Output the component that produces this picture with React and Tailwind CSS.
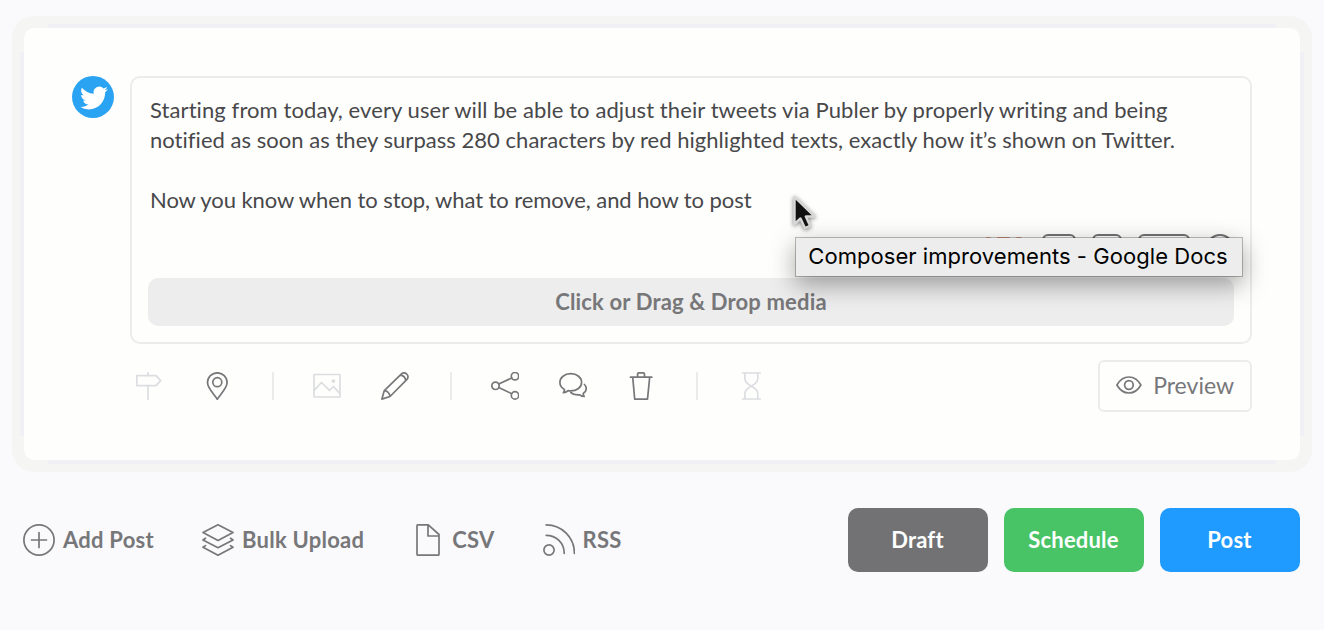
import React from "react";

const iconProps = {
  fill: "none",
  stroke: "currentColor",
  strokeWidth: 1.7,
  strokeLinecap: "round",
  strokeLinejoin: "round",
};

const ToolIcon = ({ children, muted }) => (
  <svg
    viewBox="0 0 28 28"
    className={`size-7 ${muted ? "text-[#dcdde0]" : "text-[#77777a]"}`}
    {...iconProps}
  >
    {children}
  </svg>
);

const ActionIcon = ({ children }) => (
  <svg viewBox="0 0 32 32" className="size-8 shrink-0" {...iconProps}>
    {children}
  </svg>
);

const Divider = () => <div className="ml-px -mr-px h-7 w-0.5 bg-[#ebebec]" />;

const TwitterAvatar = () => (
  <div className="flex size-[42px] shrink-0 items-center justify-center rounded-full bg-[#2aa3f3] pt-px pl-0.5">
    <svg viewBox="0 0 24 24" className="size-7" fill="#fff">
      <path d="M23.95 4.57a10 10 0 0 1-2.82.77 4.96 4.96 0 0 0 2.16-2.72c-.95.55-2 .95-3.13 1.18a4.92 4.92 0 0 0-8.38 4.48C7.69 8.1 4.07 6.13 1.64 3.16a4.92 4.92 0 0 0 1.52 6.57 4.9 4.9 0 0 1-2.23-.61v.06c0 2.38 1.7 4.37 3.95 4.82a5 5 0 0 1-2.21.09 4.94 4.94 0 0 0 4.6 3.42A9.87 9.87 0 0 1 0 19.54a13.99 13.99 0 0 0 7.55 2.21c9.05 0 14-7.5 14-13.98 0-.21 0-.42-.02-.63a9.94 9.94 0 0 0 2.46-2.55z" />
    </svg>
  </div>
);

const Cursor = () => (
  <svg
    viewBox="0 0 24 36"
    className="absolute top-[117px] left-[660px] h-9 w-6 drop-shadow-[0_1px_2px_rgba(0,0,0,0.5)]"
  >
    <path
      d="M2.5 2v27l6-5.5 4.4 9.5 5.2-2.2-4.3-9.300h8.700z"
      fill="#111"
      stroke="#d8d8d8"
      strokeWidth="2.4"
      strokeLinejoin="round"
    />
  </svg>
);

const Toolbar = () => (
  <div className="flex items-center gap-10">
    <ToolIcon muted>
      <path d="M1.8 3.7h19.2l4.7 5-4.7 4.9H1.8zM13 .8v2.9M13 13.6v13.6" />
    </ToolIcon>
    <ToolIcon>
      <path d="M14.3 27.2C11.5 22.5 4.5 16.5 4.5 10.6a9.8 9.8 0 0 1 19.6 0c0 5.9-7 11.9-9.8 16.6z" />
      <circle cx="14.3" cy="10.2" r="4.5" />
    </ToolIcon>
    <Divider />
    <ToolIcon muted>
      <rect x="1" y="2.5" width="26" height="22.5" rx="0.6" />
      <path d="M1.2 18.3 8.5 10.5l8 7.8 4-3.8 6.3 6.8" />
      <circle cx="20.4" cy="9" r="1" fill="currentColor" />
    </ToolIcon>
    <ToolIcon>
      <path d="m.9 27.1 2.4-8.5L20.5 1.8a3.5 3.5 0 0 1 5.2.3 3.5 3.5 0 0 1 .3 5.2L9 24.5zM3.3 18.6c2.9.2 5.3 2.700 5.700 5.900M19.200 3.200c3 .3 5.200 2.500 5.500 5.400" />
    </ToolIcon>
    <Divider />
    <ToolIcon>
      <circle cx="4.5" cy="13.8" r="3.7" />
      <circle cx="24" cy="4.2" r="3.7" />
      <circle cx="24" cy="23.4" r="3.7" />
      <path d="M7.8 12.1 20.7 5.9M7.8 15.5l12.9 6.2" />
    </ToolIcon>
    <ToolIcon>
      <path d="M4.4 20.7c.9-.9 1.3-2 1-3.3C2.6 15.8.9 13.3.9 10.5c0-5 4.7-8.8 10.9-8.8s10.800 3.900 10.800 8.800-4.700 8.400-10.900 8.400c-.9 0-1.800-.1-2.600-.2-1.300 1.200-3 2-4.700 2z" />
      <path d="M25.400 12.500c1.300 1.200 2 2.600 1.800 4.300-.1 2-1.200 3.700-3 4.800 0 1.200.3 2.100 1 2.900-1.700 0-3.200-.6-4.400-1.700-3.500.5-6.800-.3-9-2.300" />
    </ToolIcon>
    <ToolIcon>
      <path d="M3.5 5.2h21.3M5.7 5.2l2 21.9h12.8l2.2-21.9M10.6 5V2.2q0-1.3 1.3-1.3h4.3q1.3 0 1.3 1.3V5" />
    </ToolIcon>
    <Divider />
    <ToolIcon muted>
      <path d="M5.5 1h17.7M5.5 27h17.7M7.9 1.2v5.5c0 4 2.9 5 6.4 7.4 3.5-2.4 6.5-3.4 6.5-7.4V1.2M7.9 26.8v-5.3c0-4 2.9-5 6.4-7.4 3.5 2.4 6.5 3.4 6.5 7.4v5.3" />
    </ToolIcon>
  </div>
);

const links = [
  {
    label: "Add Post",
    icon: (
      <>
        <circle cx="16" cy="16" r="15.1" />
        <path d="M16 8.5v15M8.5 16h15" />
      </>
    ),
  },
  {
    label: "Bulk Upload",
    icon: (
      <path d="M16 .8 31 8.5 16 16.5 1 8.5zM3.5 14.3 1 16l15 7.7L31 16l-2.5-1.7M3.5 21.6 1 23.3l15 7.9 15-7.9-2.5-1.7" />
    ),
  },
  {
    label: "CSV",
    icon: (
      <path d="M6 .8h10.3L27 10.5v19.7a1 1 0 0 1-1 1H6a1 1 0 0 1-1-1V1.8a1 1 0 0 1 1-1zM16 1v11h11" />
    ),
  },
  {
    label: "RSS",
    icon: (
      <>
        <circle cx="6" cy="26" r="5.1" />
        <path d="M3.2 11.3c10 0 18 7.7 18 18M3.2.9c15.7 0 28.2 12.6 28.2 28.4" />
      </>
    ),
  },
];

const buttons = [
  { label: "Draft", color: "bg-[#727274]" },
  { label: "Schedule", color: "bg-[#48c366]" },
  { label: "Post", color: "bg-[#1f9aff]" },
];

export default function App() {
  return (
    <div className="h-[630px] w-[1324px] overflow-hidden bg-[#fafafd] px-6 pt-7 font-['Lato',sans-serif] text-[22px] [font-variant-ligatures:none]">
      <section className="flex h-[432px] items-start gap-4 rounded-[10px] bg-[#fefefd] px-12 pt-12 shadow-[0_-28px_0_-24px_#f1f1f5,0_28px_0_-24px_#f1f1f5,-28px_0_0_-24px_#f1f1f5,28px_0_0_-24px_#f1f1f5,0_0_0_12px_#f5f5f4]">
        <TwitterAvatar />
        <div className="w-[1122px]">
          <div className="relative flex h-[268px] flex-col rounded-[10px] border-2 border-[#ececed] px-4 pt-[17px] pb-4">
            <div className="pl-0.5 leading-[30px] whitespace-nowrap text-[#48484a]">
              <p className="tracking-[0.09px]">Starting from today, every user will be able to adjust their tweets via Publer by properly writing and being</p>
              <p className="tracking-[0.03px]">notified as soon as they surpass 280 characters by red highlighted texts, exactly how it’s shown on Twitter.</p>
              <p className="mt-[30px] tracking-[-0.08px]">Now you know when to stop, what to remove, and how to post</p>
            </div>

            {/* Counter and shortcuts, mostly covered by the tooltip */}
            <div className="absolute top-[156px] right-4 flex h-6 items-start text-[#727274]">
              <span className="mr-4 text-[26px] leading-[26px] text-[#d5663f]/60">273</span>
              <span className="mr-4 h-6 w-[34px] rounded-md border-2 border-current" />
              <span className="mr-4 h-6 w-[30px] rounded-md border-2 border-current" />
              <span className="mr-4 h-6 w-[52px] rounded-md border-2 border-current" />
              <span className="size-7 rounded-full border-2 border-current" />
            </div>

            <button className="mt-auto h-12 rounded-[10px] bg-[#ededed] pb-0.5 font-bold tracking-[0.16px] text-[#77777a]">
              Click or Drag &amp; Drop media
            </button>

            <Cursor />
            <div className="absolute top-[159px] left-[663px] flex h-10 w-[448px] items-center justify-center border border-black/25 bg-[#ededed] bg-clip-padding pr-0.5 pb-0.5 font-['Inter',sans-serif] tracking-[0.05px] whitespace-nowrap text-black shadow-[0_8px_24px_rgba(0,0,0,0.35)]">
              Composer improvements - Google Docs
            </div>
          </div>

          <div className="mt-4 flex h-[52px] items-center justify-between pl-[5px]">
            <Toolbar />
            <button className="flex h-[52px] w-[154px] items-center justify-between rounded-md border-2 border-[#ececed] px-4 pb-0.5 text-[23px] text-[#77777a]">
              <svg viewBox="0 0 26 20" className="h-5 w-[26px]" {...iconProps}>
                <path d="M.9 10c3-5.3 7.2-8 12-8s9 2.7 12 8c-3 5.3-7.2 8-12 8S3.9 15.3.9 10z" />
                <circle cx="12.9" cy="10" r="4.3" />
              </svg>
              <span>Preview</span>
            </button>
          </div>
        </div>
      </section>

      <div className="mt-12 flex items-center justify-between">
        <div className="-ml-px flex items-center gap-12 font-bold tracking-[0.25px] text-[#77777a]">
          {links.map(({ label, icon }) => (
            <button key={label} className="flex items-center gap-2">
              <ActionIcon>{icon}</ActionIcon>
              <span className="pb-0.5">{label}</span>
            </button>
          ))}
        </div>
        <div className="flex gap-4 font-bold tracking-[0.2px] text-white">
          {buttons.map(({ label, color }) => (
            <button key={label} className={`h-16 w-[140px] rounded-[10px] pr-px pb-0.5 ${color}`}>
              {label}
            </button>
          ))}
        </div>
      </div>
    </div>
  );
}
